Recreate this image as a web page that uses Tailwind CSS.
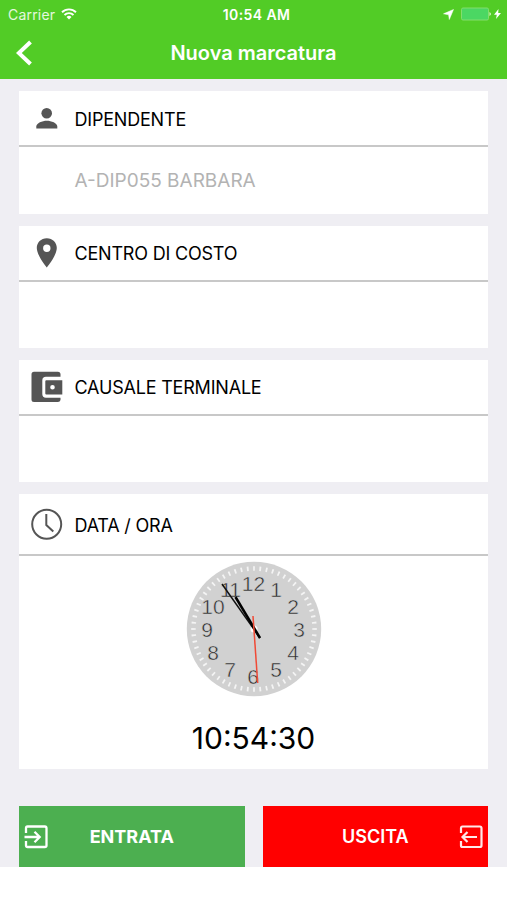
<!DOCTYPE html>
<html lang="it">
<head>
    <meta charset="UTF-8">
    <meta name="viewport" content="width=device-width, initial-scale=1.0">
    <title>Nuova marcatura</title>
    <script src="https://cdn.jsdelivr.net/npm/@tailwindcss/browser@4"></script>
</head>
<body class="bg-white font-['Inter','Liberation_Sans',sans-serif] text-black">
    <div class="h-[867px] bg-[#efeef3]">
        <!-- Status bar and navigation bar -->
        <header class="h-[79px] bg-[#52cc26] text-white">
            <div class="grid h-7 grid-cols-3 items-center">
                <div class="flex items-center gap-[6px] pl-2">
                    <span class="text-[14px] tracking-[0.2px] text-white/85">Carrier</span>
                    <svg class="h-3 w-4" viewBox="0 0 16 12" fill="none" stroke="white" stroke-width="1.9">
                        <path d="M1 4.2a10 10 0 0 1 14 0M3.5 7a6.3 6.3 0 0 1 9 0"/>
                        <path d="M8 11.6 5.5 9a3.6 3.6 0 0 1 5 0z" fill="white" stroke="none"/>
                    </svg>
                </div>
                <span class="pl-[6px] text-center text-[14px] font-semibold tracking-[0.4px] whitespace-nowrap">10:54 AM</span>
                <div class="flex items-center justify-end pr-[6px]">
                    <svg class="mr-[7px] h-[11px] w-[11px]" viewBox="0 0 11 11" fill="white"><path d="M10.500.5 6.300 10.500 5.600 5.800.500 4.800z" stroke="white" stroke-width=".5"/></svg>
                    <svg class="h-[14px] w-[32px]" viewBox="0 0 32 14">
                        <rect x=".5" y="1" width="27" height="12" rx="1.5" fill="#4bd763" stroke="#83de6c"/>
                        <path d="M28.500 5q2.800 2 0 4z" fill="#e5fadf"/>
                    </svg>
                    <svg class="ml-[1px] h-[10px] w-[7px]" viewBox="0 0 7 10" fill="white"><path d="M4.500 0 0 5.700h2.800L2 10l5-6H4.200z"/></svg>
                </div>
            </div>
            <div class="grid h-[49px] grid-cols-[60px_1fr_60px] items-center">
                <svg class="ml-4 h-[26px] w-4" viewBox="0 0 16 26" fill="none" stroke="white" stroke-width="4"><path d="M14.500 2 2.800 13l11.700 11"/></svg>
                <h1 class="text-center text-[20px] font-semibold">Nuova marcatura</h1>
            </div>
        </header>

        <main class="flex flex-col gap-3 px-[19px] pt-3">
            <section class="h-[122.5px] bg-white">
                <div class="flex h-[56px] items-center gap-[11.5px] border-b-2 border-[#c8c8c8] pl-3">
                    <svg class="h-8 w-8" viewBox="0 0 32 32" fill="#555"><circle cx="15.700" cy="11.200" r="5.300"/><path d="M5.300 26.500v-2c0-3.600 6-5.800 10.500-5.800s10.500 2.200 10.500 5.800v2z"/></svg>
                    <h2 class="pt-[2px] text-[18px] tracking-[-0.2px]">DIPENDENTE</h2>
                </div>
                <p class="pt-[20px] pl-[55.5px] text-[19px] leading-[28px] text-[#b3b3b3]">A-DIP055 BARBARA</p>
            </section>

            <section class="h-[122px] bg-white">
                <div class="flex h-[56px] items-center gap-[11.5px] border-b-2 border-[#c8c8c8] pl-3">
                    <svg class="h-8 w-8" viewBox="0 0 32 32" fill="#555" fill-rule="evenodd"><path d="M15.800 1.300C10 1.300 5.800 5.700 5.800 11c0 7.400 10 19.500 10 19.500S25.800 18.400 25.800 11C25.800 5.700 21.600 1.300 15.800 1.300m0 6.200a3.700 3.700 0 1 1 0 7.400 3.700 3.700 0 0 1 0-7.400"/></svg>
                    <h2 class="pt-px text-[18px] tracking-[-0.2px]">CENTRO DI COSTO</h2>
                </div>
            </section>

            <section class="h-[122.5px] bg-white">
                <div class="flex h-[56px] items-center gap-[11.5px] border-b-2 border-[#c8c8c8] pl-3">
                    <svg class="h-8 w-8" viewBox="0 0 32 32" fill="#555">
                        <path d="M3 .8h24q2 0 2.500 2v3H15q-3.700 0-3.700 3.700v13.500q0 3.700 3.700 3.700h14.500v2.300q-.5 2-2.500 2H3q-2.500 0-2.500-2.500v-25Q.5.800 3 .800"/>
                        <path fill-rule="evenodd" d="M15.300 9.200h16v14.200h-16q-1 0-1-1V10.200q0-1 1-1m6.200 4.700a2.300 2.300 0 1 0 0 4.600 2.300 2.300 0 0 0 0-4.600"/>
                    </svg>
                    <h2 class="pt-[2px] text-[18px] tracking-[-0.2px]">CAUSALE TERMINALE</h2>
                </div>
            </section>

            <section class="h-[275px] bg-white">
                <div class="flex h-[62px] items-center gap-[11.5px] border-b-2 border-[#c8c8c8] pl-3">
                    <svg class="h-8 w-8" viewBox="0 0 32 32" fill="none" stroke="#555" stroke-width="2"><circle cx="15.700" cy="16.300" r="14.500"/><path d="M15.300 6v11l7 6.500"/></svg>
                    <h2 class="pt-[2px] text-[18px] tracking-[-0.2px]">DATA / ORA</h2>
                </div>
                <div class="flex flex-col items-center">
                    <svg class="mt-[5px] h-[136px] w-[136px]" viewBox="-68 -68 136 136">
                        <circle r="67.200" fill="#d1d1d1"/>
                        <circle r="60.500" fill="none" stroke="#f4f4f4" stroke-width="4.500" pathLength="60" stroke-dasharray=".28 .72" stroke-dashoffset=".14"/>
                        <!-- Thin face-coloured outline keeps the numerals light -->
                        <g class="font-['Liberation_Sans',sans-serif] text-[21px]" fill="#2c2c2c" stroke="#d1d1d1" stroke-width=".5" text-anchor="middle">
                            <text x="-.5" y="-38">12</text>
                            <text x="22" y="-32">1</text>
                            <text x="39" y="-15">2</text>
                            <text x="45" y="8">3</text>
                            <text x="39" y="31">4</text>
                            <text x="22" y="48">5</text>
                            <text x="-1" y="54.500">6</text>
                            <text x="-24" y="48">7</text>
                            <text x="-41" y="31">8</text>
                            <text x="-47" y="8">9</text>
                            <text x="-41" y="-15">10</text>
                            <text x="-23.500" y="-32" textLength="21">11</text>
                        </g>
                        <circle r="3.500" fill="white"/>
                        <path d="M-32-45 6 9" stroke="#111" stroke-width="1.500"/>
                        <path d="M-18.500-32 6 9" stroke="#000" stroke-width="2.500"/>
                        <path d="M-1-13 3.700 54" stroke="#f04a36" stroke-width="1.500"/>
                    </svg>
                    <time class="mt-[20px] text-[30px] leading-[42px]">10:54:30</time>
                </div>
            </section>
        </main>

        <div class="mt-[37px] grid grid-cols-2 gap-[18px] px-[19px]">
            <button class="grid h-[61px] grid-cols-[35px_1fr_35px] items-center bg-[#4caf50] text-[18px] font-bold text-white">
                <svg class="ml-[5px] h-6 w-6" viewBox="0 0 24 24" fill="none" stroke="white" stroke-width="2.300"><path d="M2 8V3.300Q2 1.500 3.500 1.500h17.300Q22.500 1.500 22.500 3.300v17.200q0 1.500-1.700 1.500H3.500Q2 22 2 20.500V16M.5 12h15M10.500 6.800l5.200 5.200-5.200 5.200"/></svg>
                <span>ENTRATA</span>
            </button>
            <button class="grid h-[61px] grid-cols-[35px_1fr_35px] items-center bg-[#ff0000] text-[18px] font-semibold text-white">
                <span class="col-start-2">USCITA</span>
                <svg class="ml-[6px] h-6 w-6" viewBox="0 0 24 24" fill="none" stroke="#ffe9e9" stroke-width="2.200"><path d="M2 8V3.300Q2 1.500 3.500 1.500h17.300Q22.500 1.500 22.500 3.300v17.200q0 1.500-1.700 1.500H3.500Q2 22 2 20.500V16M18 12H3.500M8.500 7 3.500 12l5 5"/></svg>
            </button>
        </div>
    </div>
</body>
</html>
